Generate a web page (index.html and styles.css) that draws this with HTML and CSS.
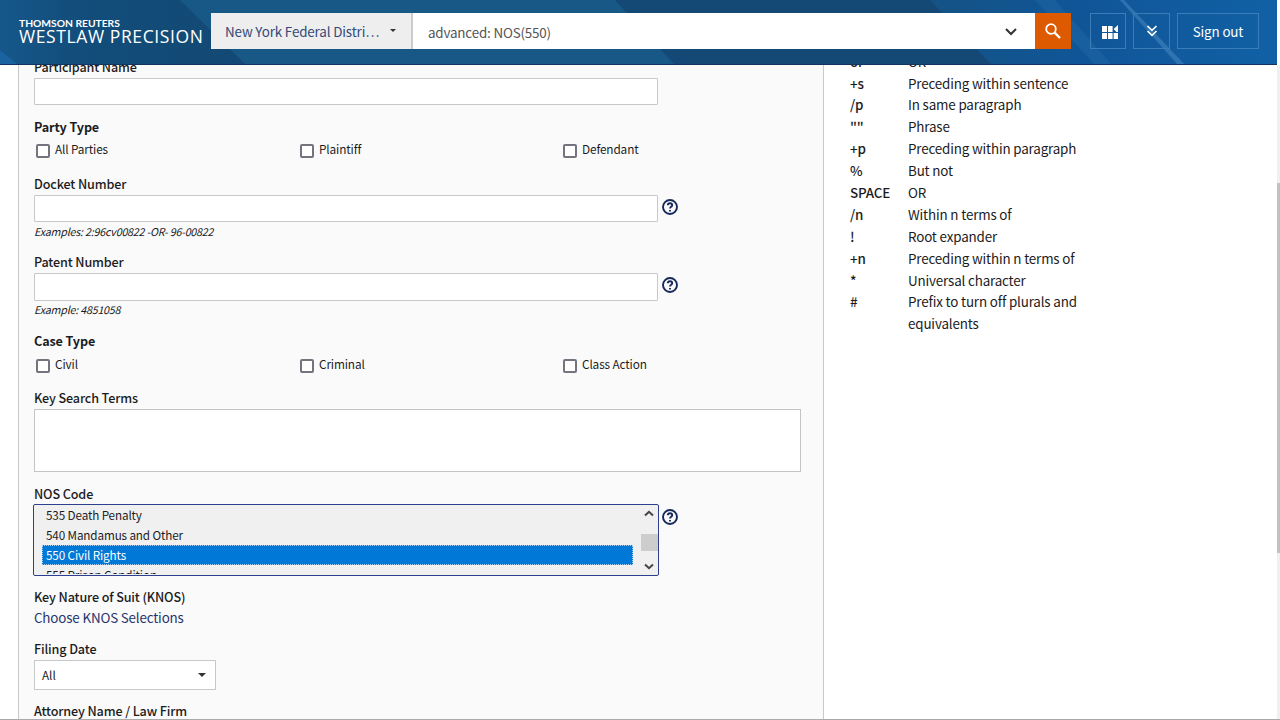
FILE: index.html
```
<!DOCTYPE html>
<html lang="en">
<head>
<meta charset="utf-8">
<title>Westlaw Precision</title>
<link rel="stylesheet" href="styles.css">
</head>
<body>
<header class="header">
  <svg class="header-art" viewBox="0 0 1277 65" preserveAspectRatio="none" aria-hidden="true">
    <defs>
      <linearGradient id="base" x1="0" x2="1"><stop offset="0" stop-color="#16578a"/><stop offset=".06" stop-color="#124d7b"/><stop offset=".19" stop-color="#134974"/><stop offset="1" stop-color="#134974"/></linearGradient>
      <linearGradient id="right" x1="0" x2="1"><stop offset="0" stop-color="#155385"/><stop offset=".4" stop-color="#105596"/><stop offset="1" stop-color="#1160a5"/></linearGradient>
    </defs>
    <rect width="1277" height="65" fill="url(#base)"/>
    <path d="M0 50L18 65H0z" fill="#1b63a0"/>
    <path d="M180 0H615L675 65H246z" fill="#175887"/>
    <path d="M930 0H1277V65H992z" fill="url(#right)"/>
    <path d="M1035 0H1055L1112 65H1095z" fill="#2774b1" opacity=".3"/>
    <path d="M1120 0H1124L1185 65H1178z" fill="#5b9bd0" opacity=".4"/>
    <path d="M0 64.5H1277" stroke="#12345f"/>
  </svg>
  <div class="logo"><span class="logo-top">THOMSON REUTERS</span><span class="logo-main">WESTLAW PRECISION</span></div>
  <div class="search">
    <div class="scope"><span>New York Federal Distri…</span><i class="caret"></i></div>
    <div class="query"><span>advanced: NOS(550)</span>
      <svg width="14" height="10" viewBox="0 0 14 10"><path d="M2 2l5 5 5-5" fill="none" stroke="#333" stroke-width="2"/></svg>
    </div>
    <div class="go"><svg width="18" height="18" viewBox="0 0 18 18" fill="none" stroke="#fff"><circle cx="7" cy="7" r="4.8" stroke-width="1.8"/><path d="M10.6 10.6L16 16" stroke-width="2.3"/></svg></div>
  </div>
  <div class="btn grid"><svg width="17" height="14" viewBox="0 0 17 14" fill="#fff"><path d="M0 0h5v6H0zM6 0h4.600v6H6zM0 7h5v6H0zM6 7h4.600v6H6zM11.600 7H16v6h-4.400zM11.600 3L16 -1v7h-1.500z"/></svg></div>
  <div class="btn more"><svg width="12" height="12" viewBox="0 0 12 12" fill="none" stroke="#fff" stroke-width="1.700"><path d="M1.500 1L6 5.300 10.500 1M1.500 6L6 10.300 10.500 6"/></svg></div>
  <div class="btn signout">Sign out</div>
</header>
<main class="main">
  <section class="panel">
    <div class="label first">Participant Name</div>
    <div class="input"></div>
    <div class="label bold party">Party Type</div>
    <div class="checks"><label><i class="box"></i>All Parties</label><label><i class="box"></i>Plaintiff</label><label><i class="box"></i>Defendant</label></div>
    <div class="label docket">Docket Number</div>
    <div class="row"><div class="input"></div><svg class="help" viewBox="0 0 16 16"><circle cx="8" cy="8" r="7"/><path d="M5.800 6.200C5.900 3.500 10.200 3.600 10.200 6.200 10.200 7.800 8 7.700 8 9.600M8 10.900v1.500"/></svg></div>
    <div class="example">Examples: 2:96cv00822 -OR- 96-00822</div>
    <div class="label patent">Patent Number</div>
    <div class="row"><div class="input tall"></div><svg class="help" viewBox="0 0 16 16"><circle cx="8" cy="8" r="7"/><path d="M5.800 6.200C5.900 3.500 10.200 3.600 10.200 6.200 10.200 7.800 8 7.700 8 9.600M8 10.900v1.500"/></svg></div>
    <div class="example second">Example: 4851058</div>
    <div class="label bold case">Case Type</div>
    <div class="checks case-checks"><label><i class="box"></i>Civil</label><label><i class="box"></i>Criminal</label><label><i class="box"></i>Class Action</label></div>
    <div class="label terms">Key Search Terms</div>
    <div class="textarea"></div>
    <div class="label nos">NOS Code</div>
    <div class="row list-row">
      <div class="list">
        <div class="options"><div>535 Death Penalty</div><div>540 Mandamus and Other</div><div class="selected">550 Civil Rights</div><div>555 Prison Condition</div></div>
        <div class="scroll">
          <svg width="10" height="7" viewBox="0 0 10 7"><path d="M1 5.500L5 1.800 9 5.500"/></svg>
          <i class="thumb"></i>
          <svg width="10" height="7" viewBox="0 0 10 7"><path d="M1 1.500L5 5.200 9 1.500"/></svg>
        </div>
      </div>
      <svg class="help" viewBox="0 0 16 16"><circle cx="8" cy="8" r="7"/><path d="M5.800 6.200C5.900 3.500 10.200 3.600 10.200 6.200 10.200 7.800 8 7.700 8 9.600M8 10.900v1.500"/></svg>
    </div>
    <div class="label knos">Key Nature of Suit (KNOS)</div>
    <div class="link">Choose KNOS Selections</div>
    <div class="label filing">Filing Date</div>
    <div class="select">All<i class="arrow"></i></div>
    <div class="label attorney">Attorney Name / Law Firm</div>
  </section>
  <aside class="connectors">
    <b>or</b><span>OR</span>
    <b>+s</b><span>Preceding within sentence</span>
    <b>/p</b><span>In same paragraph</span>
    <b>""</b><span>Phrase</span>
    <b>+p</b><span>Preceding within paragraph</span>
    <b>%</b><span>But not</span>
    <b>SPACE</b><span>OR</span>
    <b>/n</b><span>Within n terms of</span>
    <b>!</b><span>Root expander</span>
    <b>+n</b><span>Preceding within n terms of</span>
    <b>*</b><span>Universal character</span>
    <b>#</b><span>Prefix to turn off plurals and equivalents</span>
  </aside>
  <div class="track"><i></i></div>
</main>
</body>
</html>
```
FILE: styles.css
```
* { box-sizing: border-box; }
body {
  margin: 0; width: 1280px; height: 720px; overflow: hidden; background: #fff;
  display: flex; flex-direction: column;
  font-family: "Noto Sans CJK SC", "Noto Sans", sans-serif; font-size: 12.6px; color: #1c1c1e;
  white-space: nowrap;
}
svg { display: block; flex: none; }
i { display: block; }

.header { position: relative; flex: none; width: 1277px; height: 65px; display: flex; align-items: flex-start; padding: 13px 0 0 19px; }
.header-art { position: absolute; inset: 0; width: 1277px; height: 65px; z-index: -1; }
.logo { width: 192px; color: #fff; display: flex; flex-direction: column; }
.logo-top { font-family: Lato, sans-serif; font-weight: 700; font-size: 10.3px; line-height: 11px; margin-top: 5px; letter-spacing: -.02px; }
.logo-main { font-family: "Open Sans", sans-serif; font-size: 17.5px; line-height: 15px; letter-spacing: .6px; }
.search { display: flex; width: 860px; height: 36px; }
.scope { width: 202px; background: #eee; border-right: 2px solid #ccc; display: flex; align-items: center; padding-left: 14px; font-size: 13.4px; letter-spacing: -.14px; color: #334a78; }
.scope .caret { margin-left: 11px; margin-top: -2px; border: 3px solid transparent; border-top-color: #333; border-bottom: 0; }
.query { flex: 1; background: #fff; display: flex; align-items: center; justify-content: space-between; padding: 1px 17px 0 15px; font-size: 13.4px; letter-spacing: -.18px; color: #555; }
.go { width: 36px; background: #de5a00; padding: 9px 0 0 9px; }
.btn { height: 36px; border: 1px solid #3a7db8; display: flex; align-items: center; justify-content: center; color: #fff; font-size: 13.4px; letter-spacing: -.15px; }
.grid { width: 36px; margin-left: 19px; padding: 3px 0 0 5px; }
.grid svg { overflow: visible; }
.more { width: 37px; margin-left: 7px; }
.signout { width: 82px; margin-left: 7px; }

.main { flex: 1; min-height: 0; overflow: hidden; display: flex; border-bottom: 1px solid #aaa; }
.panel { flex: none; width: 806px; margin: -8px 0 0 18px; padding-left: 15px; background: #fafafa; border: solid #c8c8c8; border-width: 0 1px; height: 670px; }
.label { height: 20px; line-height: 20px; font-weight: 500; letter-spacing: -.13px; }
.bold { font-weight: 700; line-height: 19px; }
.first { line-height: 19px; }
.input { width: 624px; height: 27px; margin-top: 1px; background: #fff; border: 1px solid #c8c8c8; border-radius: 1px; }
.tall { height: 28px; }
.row { display: flex; }
.help { width: 16px; height: 16px; margin: 5px 0 0 4px; fill: none; stroke: #17295c; stroke-width: 1.9; }
.party { margin-top: 12px; }
.checks { display: grid; grid-template-columns: 264px 263px 200px; height: 20px; line-height: 18px; margin-top: 3px; font-size: 11.8px; letter-spacing: -.13px; }
.checks label { display: flex; }
.box { width: 14px; height: 14px; margin: 4px 5px 0 2px; border: 2px solid #74747e; border-radius: 2px; background: #fff; }
.docket { margin-top: 14px; line-height: 19px; }
.example { height: 20px; line-height: 19px; font-size: 10.7px; font-style: italic; letter-spacing: -.2px; }
.patent { margin-top: 10px; }
.second { margin-top: -1px; }
.case { margin-top: 11px; }
.case-checks { margin-top: 4px; }
.terms { margin-top: 13px; }
.textarea { margin-top: 1px; width: 767px; height: 63px; background: #fff; border: 1px solid #c4c4c4; }
.nos { margin-top: 12px; }
.list-row { margin-left: -1px; }
.list { width: 626px; height: 72px; background: #f0f0f0; border: 1px solid #2f3f90; border-radius: 2px; display: flex; overflow: hidden; }
.options { width: 600px; height: 69px; overflow: hidden; padding: 0 0 0 8px; font-size: 11.7px; letter-spacing: -.13px; line-height: 20px; }
.options div { height: 20px; padding-left: 4px; }
.options .selected { color: #fff; background: #0078d7; outline: 1px dotted #a9cdf0; outline-offset: -1px; width: 591px; }
.scroll { width: 24px; padding: 5px 0 5px 6px; display: flex; flex-direction: column; align-items: center; }
.scroll svg { fill: none; stroke: #444; stroke-width: 2; }
.thumb { width: 17px; height: 17px; margin: 17px 0 12px; background: #cdcdcd; }
.list-row .help { margin: 5px 0 0 3px; }
.knos { margin-top: 11px; }
.link { margin-top: 1px; height: 20px; line-height: 19px; font-size: 13.4px; letter-spacing: -.17px; color: #27356e; }
.filing { margin-top: 11px; }
.select { margin-top: 1px; width: 182px; height: 30px; background: #fff; border: 1px solid #c8c8c8; display: flex; align-items: center; justify-content: space-between; padding: 0 9px 1px 7px; font-size: 11.7px; }
.arrow { border: 4.5px solid transparent; border-top-color: #333; border-bottom: 0; }
.attorney { margin-top: 11px; }

.connectors { flex: none; width: 240px; margin: -14.4px 0 0 26px; display: grid; grid-template-columns: 58px 182px; grid-auto-rows: 21.9px; line-height: 21.9px; font-size: 13.4px; letter-spacing: -.16px; align-content: start; }
.connectors b { font-weight: 500; }
.connectors span { white-space: normal; }
.track { width: 3px; margin-left: auto; background: #f0f0f0; padding-top: 118px; }
.track i { height: 370px; background: #c1c1c1; }
```
